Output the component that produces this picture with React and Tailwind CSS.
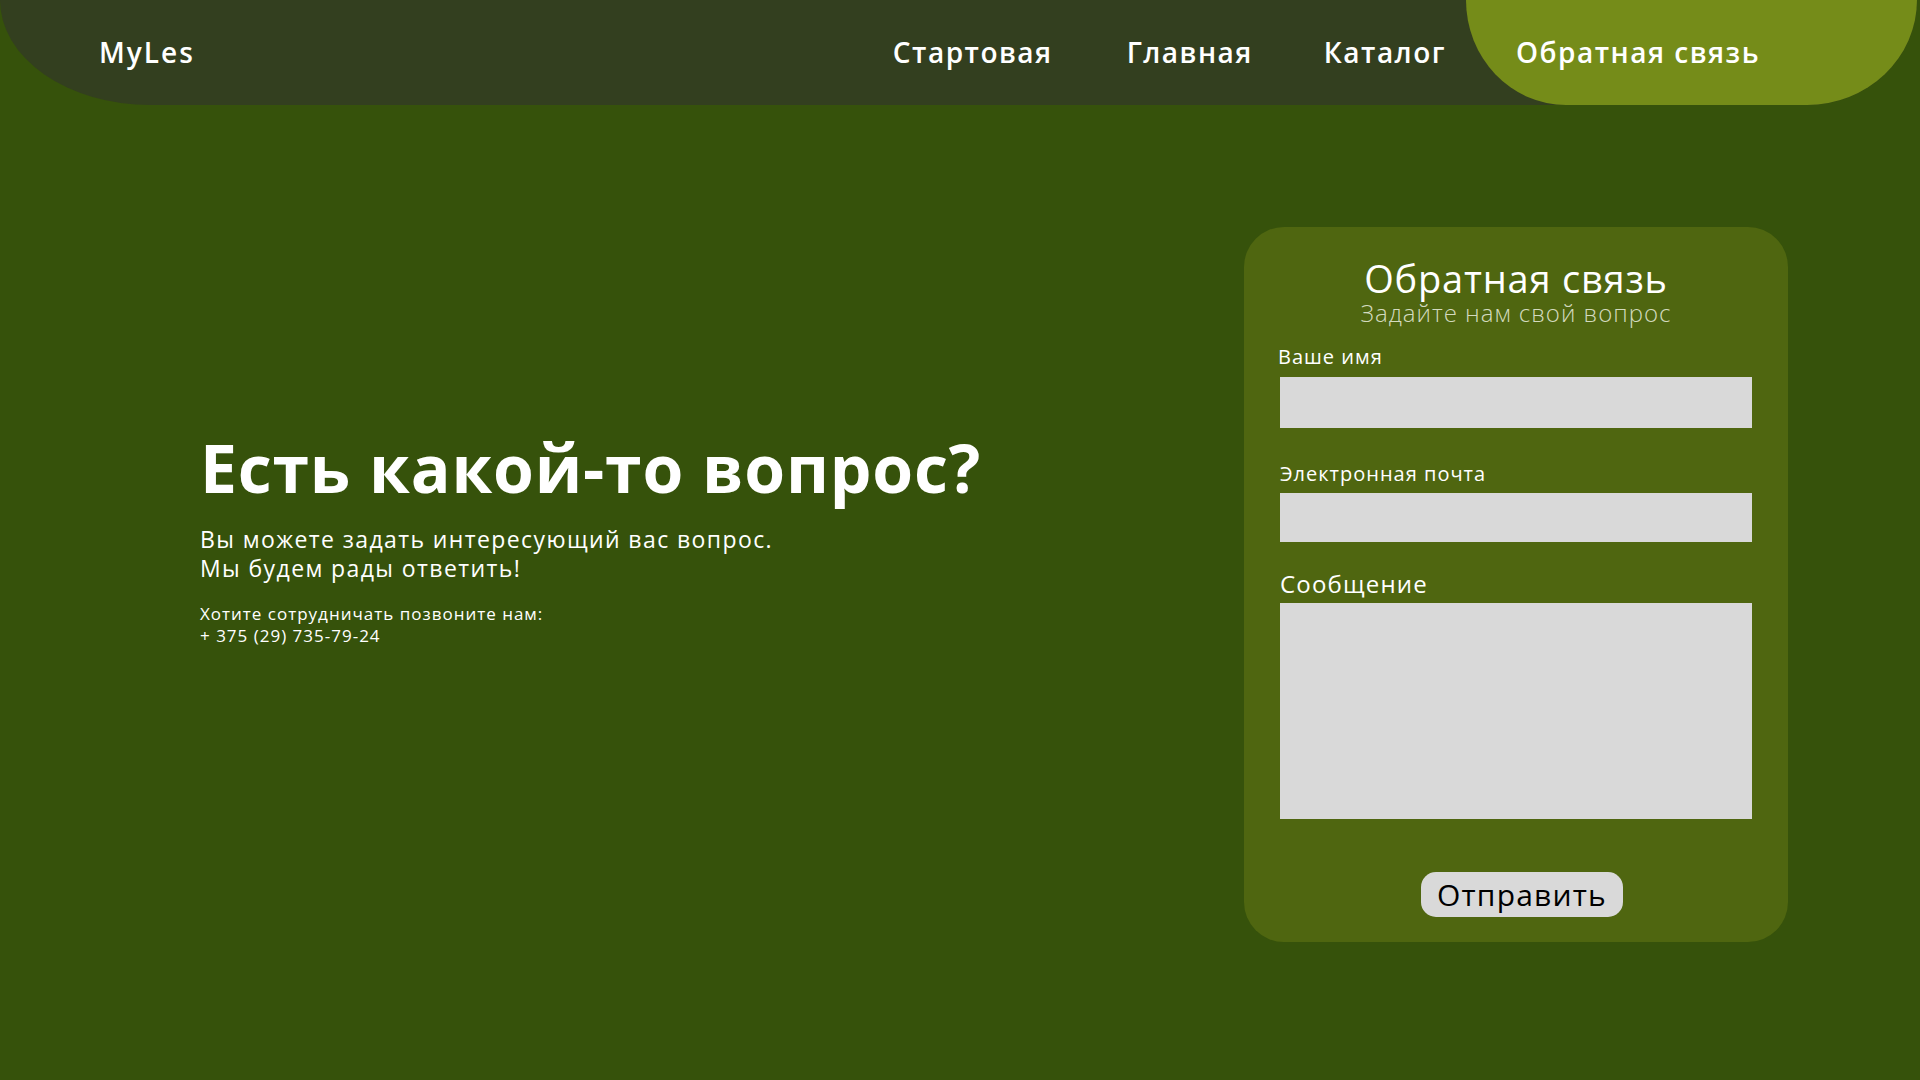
const font = { fontFamily: '"Open Sans", "Noto Sans", sans-serif' };

function Field({ label, className, children }) {
  return (
    <div className="flex flex-col">
      <label className={className}>{label}</label>
      {children}
    </div>
  );
}

export default function App() {
  return (
    <div className="min-h-screen h-[1080px] bg-[#36520b] text-white overflow-hidden" style={font}>
      <header className="flex items-center h-[105px] bg-[#333f1f] rounded-bl-[150px_105px] rounded-br-[110px_105px] mr-[3px]">
        <a className="pl-[99px] -mt-[2px] text-[28px] font-semibold tracking-[2px]">MyLes</a>
        <nav className="ml-auto flex items-center h-full text-[28px] font-semibold tracking-[1.5px]">
          <a className="mr-[74px] -mt-[2px]">Стартовая</a>
          <a className="mr-[71px] -mt-[2px]">Главная</a>
          <a className="mr-[20px] -mt-[2px]">Каталог</a>
          <a className="flex items-center h-full w-[451px] pl-[50px] pb-[2px] bg-[#758c19] rounded-bl-[100px_105px] rounded-br-[110px_105px]">
            Обратная связь
          </a>
        </nav>
      </header>

      <main className="flex items-start pt-[122px]">
        <section className="pl-[200px] pt-[200px]">
          <h1 className="text-[66px] font-bold leading-[80px] tracking-[0.8px]">Есть какой-то вопрос?</h1>
          <p className="mt-[18px] text-[23px] leading-[29px] tracking-[1.4px]">
            Вы можете задать интересующий вас вопрос.
            <br />
            Мы будем рады ответить!
          </p>
          <p className="mt-[20px] text-[17px] leading-[22px] tracking-[1px]">
            Хотите сотрудничать позвоните нам:
            <br />+ 375 (29) 735-79-24
          </p>
        </section>

        <form className="ml-auto mr-[132px] w-[544px] h-[715px] flex flex-col px-[36px] pt-[31px] bg-[#4f6610] rounded-[40px]">
          <h2 className="text-center text-[38px] leading-[40px] tracking-[0.8px]">Обратная связь</h2>
          <p className="mt-[2px] text-center text-[24px] leading-[26px] font-light tracking-[1px] text-[#d3dabf]">
            Задайте нам свой вопрос
          </p>

          <div className="mt-[19px]">
            <Field label="Ваше имя" className="text-[20px] leading-[24px] font-medium tracking-[1px] -ml-[2px]">
              <input className="mt-[8px] h-[51px] bg-[#d9d9d9] outline-none" />
            </Field>
          </div>
          <div className="mt-[34px]">
            <Field label="Электронная почта" className="text-[20px] leading-[24px] font-medium tracking-[1px]">
              <input className="mt-[7px] h-[49px] bg-[#d9d9d9] outline-none" />
            </Field>
          </div>
          <div className="mt-[27px]">
            <Field label="Сообщение" className="text-[24px] leading-[30px] font-medium tracking-[1.2px]">
              <textarea className="mt-[4px] h-[216px] bg-[#d9d9d9] outline-none resize-none" />
            </Field>
          </div>

          <button
            type="button"
            className="mt-[53px] ml-[141px] w-[202px] h-[45px] rounded-[15px] bg-[#d9d9d9] text-black text-[30px] leading-none tracking-[1.2px]"
          >
            Отправить
          </button>
        </form>
      </main>
    </div>
  );
}
